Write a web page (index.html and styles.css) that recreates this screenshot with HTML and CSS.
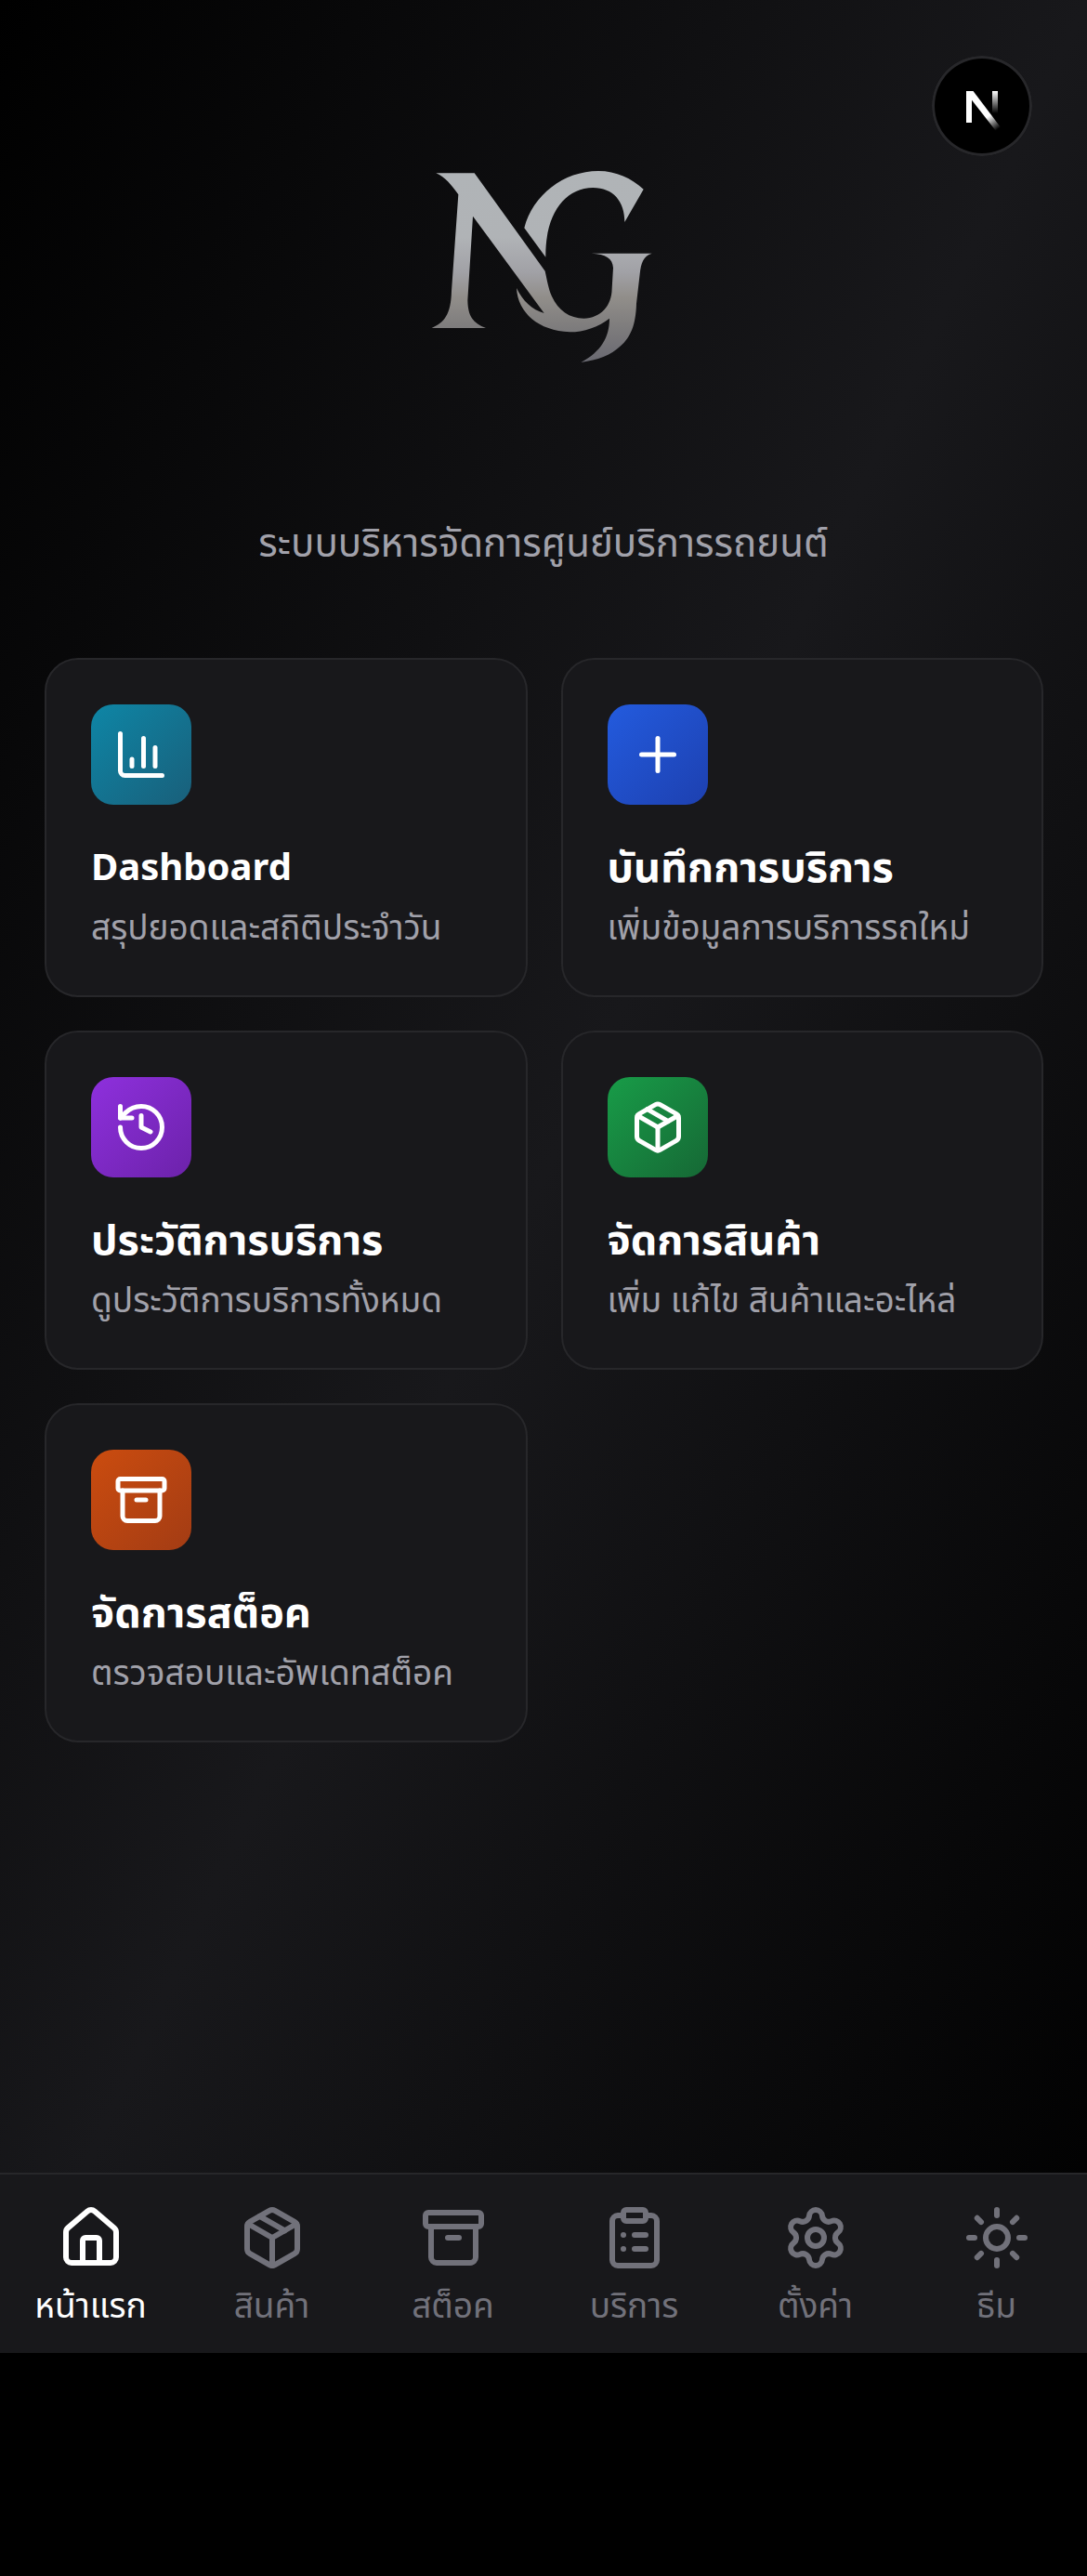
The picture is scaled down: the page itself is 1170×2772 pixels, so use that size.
FILE: index.html
```html
<!DOCTYPE html>
<html lang="th">
<head>
  <meta charset="UTF-8">
  <meta name="viewport" content="width=device-width, initial-scale=1">
  <title>NG</title>
  <link rel="stylesheet" href="styles.css">
</head>
<body>

  <!-- Shared icons -->
  <svg class="sprite" aria-hidden="true">
    <symbol id="icon-package" viewBox="0 0 24 24">
      <path d="M11 21.73a2 2 0 0 0 2 0l7-4A2 2 0 0 0 21 16V8a2 2 0 0 0-1-1.73l-7-4a2 2 0 0 0-2 0l-7 4A2 2 0 0 0 3 8v8a2 2 0 0 0 1 1.73z"/>
      <path d="M12 22V12"/>
      <path d="M3.29 7 12 12l8.71-5"/>
      <path d="m7.5 4.27 9 5.15"/>
    </symbol>
    <symbol id="icon-archive" viewBox="0 0 24 24">
      <rect width="20" height="5" x="2" y="3" rx="1"/>
      <path d="M4 8v11a2 2 0 0 0 2 2h12a2 2 0 0 0 2-2V8"/>
      <path d="M10 12h4"/>
    </symbol>
  </svg>

  <div class="app">
    <header class="header">
      <svg class="logo" viewBox="0 0 870 750" role="img" aria-label="NG">
        <defs>
          <linearGradient id="silver" gradientUnits="userSpaceOnUse" x1="0" y1="70" x2="0" y2="690">
            <stop offset="0" stop-color="#b0b4b7"/>
            <stop offset="0.35" stop-color="#b0b3b6"/>
            <stop offset="0.53" stop-color="#a1a1a6"/>
            <stop offset="0.66" stop-color="#918e8a"/>
            <stop offset="0.8" stop-color="#807e7e"/>
            <stop offset="1" stop-color="#696971"/>
          </linearGradient>
        </defs>
        <g fill="url(#silver)">
          <path d="M88 79H212L440 395C447 425 450 450 462 477C482 522 520 548 565 548C620 546 655 508 656 452L660 385C658 353 636 341 590 338H785C757 347 750 368 746 405L735 500C733 570 716 608 684 637C652 668 610 682 556 690C620 655 648 610 648 548C612 576 565 592 520 592C420 588 352 530 348 450C368 492 398 520 437 531L207 218L190 490C191 542 208 564 249 579H74C115 562 136 535 138 460L160 148C138 118 118 92 88 79Z"/>
          <path d="M373 256C400 150 500 72 612 72C670 72 720 96 758 131L697 237C697 170 660 126 595 126C500 128 440 215 442 350Z"/>
        </g>
      </svg>
      <p class="tagline">ระบบบริหารจัดการศูนย์บริการรถยนต์</p>
    </header>

    <main class="menu">
      <a class="card" href="#dashboard">
        <span class="card-icon cyan">
          <svg class="icon" viewBox="0 0 24 24" aria-hidden="true">
            <path d="M3 3v16a2 2 0 0 0 2 2h16"/>
            <path d="M18 17V9"/>
            <path d="M13 17V5"/>
            <path d="M8 17v-3"/>
          </svg>
        </span>
        <h2 lang="en">Dashboard</h2>
        <p>สรุปยอดและสถิติประจำวัน</p>
      </a>
      <a class="card" href="#service-new">
        <span class="card-icon blue">
          <svg class="icon" viewBox="0 0 24 24" aria-hidden="true">
            <path d="M5 12h14"/>
            <path d="M12 5v14"/>
          </svg>
        </span>
        <h2>บันทึกการบริการ</h2>
        <p>เพิ่มข้อมูลการบริการรถใหม่</p>
      </a>
      <a class="card" href="#history">
        <span class="card-icon purple">
          <svg class="icon" viewBox="0 0 24 24" aria-hidden="true">
            <path d="M3 12a9 9 0 1 0 9-9 9.75 9.75 0 0 0-6.74 2.74L3 8"/>
            <path d="M3 3v5h5"/>
            <path d="M12 7v5l4 2"/>
          </svg>
        </span>
        <h2>ประวัติการบริการ</h2>
        <p>ดูประวัติการบริการทั้งหมด</p>
      </a>
      <a class="card" href="#products">
        <span class="card-icon green">
          <svg class="icon" aria-hidden="true"><use href="#icon-package"/></svg>
        </span>
        <h2>จัดการสินค้า</h2>
        <p>เพิ่ม แก้ไข สินค้าและอะไหล่</p>
      </a>
      <a class="card" href="#stock">
        <span class="card-icon orange">
          <svg class="icon" aria-hidden="true"><use href="#icon-archive"/></svg>
        </span>
        <h2>จัดการสต็อค</h2>
        <p>ตรวจสอบและอัพเดทสต็อค</p>
      </a>
    </main>

    <nav class="bottom-nav">
      <a class="nav-item active" href="#home">
        <svg class="icon" viewBox="0 0 24 24" aria-hidden="true">
          <path d="M15 21v-8a1 1 0 0 0-1-1h-4a1 1 0 0 0-1 1v8"/>
          <path d="M3 10a2 2 0 0 1 .709-1.528l7-5.999a2 2 0 0 1 2.582 0l7 5.999A2 2 0 0 1 21 10v9a2 2 0 0 1-2 2H5a2 2 0 0 1-2-2z"/>
        </svg>
        <span>หน้าแรก</span>
      </a>
      <a class="nav-item" href="#products">
        <svg class="icon" aria-hidden="true"><use href="#icon-package"/></svg>
        <span>สินค้า</span>
      </a>
      <a class="nav-item" href="#stock">
        <svg class="icon" aria-hidden="true"><use href="#icon-archive"/></svg>
        <span>สต็อค</span>
      </a>
      <a class="nav-item" href="#services">
        <svg class="icon" viewBox="0 0 24 24" aria-hidden="true">
          <rect width="8" height="4" x="8" y="2" rx="1" ry="1"/>
          <path d="M16 4h2a2 2 0 0 1 2 2v14a2 2 0 0 1-2 2H6a2 2 0 0 1-2-2V6a2 2 0 0 1 2-2h2"/>
          <path d="M12 11h4"/>
          <path d="M12 16h4"/>
          <path d="M8 11h.01"/>
          <path d="M8 16h.01"/>
        </svg>
        <span>บริการ</span>
      </a>
      <a class="nav-item" href="#settings">
        <svg class="icon" viewBox="0 0 24 24" aria-hidden="true">
          <path d="M9.671 4.136a2.34 2.34 0 0 1 4.659 0 2.34 2.34 0 0 0 3.319 1.915 2.34 2.34 0 0 1 2.33 4.033 2.34 2.34 0 0 0 0 3.831 2.34 2.34 0 0 1-2.33 4.033 2.34 2.34 0 0 0-3.319 1.915 2.34 2.34 0 0 1-4.659 0 2.34 2.34 0 0 0-3.32-1.915 2.34 2.34 0 0 1-2.33-4.033 2.34 2.34 0 0 0 0-3.831A2.34 2.34 0 0 1 6.35 6.051a2.34 2.34 0 0 0 3.319-1.915"/>
          <circle cx="12" cy="12" r="3"/>
        </svg>
        <span>ตั้งค่า</span>
      </a>
      <button class="nav-item" type="button">
        <svg class="icon" viewBox="0 0 24 24" aria-hidden="true">
          <circle cx="12" cy="12" r="4"/>
          <path d="M12 2v2"/>
          <path d="M12 20v2"/>
          <path d="m4.93 4.93 1.41 1.41"/>
          <path d="m17.66 17.66 1.41 1.41"/>
          <path d="M2 12h2"/>
          <path d="M20 12h2"/>
          <path d="m6.34 17.66-1.41 1.41"/>
          <path d="m19.07 4.93-1.41 1.41"/>
        </svg>
        <span>ธีม</span>
      </button>
    </nav>

    <button class="dev-badge" type="button" aria-label="Next.js">
      <svg viewBox="0 0 108 108" aria-hidden="true">
        <defs>
          <linearGradient id="fade-leg" gradientUnits="userSpaceOnUse" x1="61" y1="65" x2="71" y2="79">
            <stop offset="0" stop-color="#fff"/>
            <stop offset="1" stop-color="#fff" stop-opacity="0"/>
          </linearGradient>
          <linearGradient id="fade-stem" gradientUnits="userSpaceOnUse" x1="0" y1="38" x2="0" y2="62">
            <stop offset="0" stop-color="#fff"/>
            <stop offset="1" stop-color="#fff" stop-opacity="0"/>
          </linearGradient>
        </defs>
        <path fill="#fff" d="M37 38h6v34h-6z"/>
        <path fill="url(#fade-leg)" d="M37 38h7.500L74 77l-5 4L37 40z"/>
        <path fill="url(#fade-stem)" d="M65 38h6v24h-6z"/>
      </svg>
    </button>
  </div>

</body>
</html>
```
FILE: styles.css
```css
* {
  box-sizing: border-box;
}

body {
  margin: 0;
  padding-bottom: 240px;
  background: #000;
  color: #fff;
  font-family: "Noto Sans", "Noto Sans Thai", sans-serif;
}

h2, p {
  margin: 0;
}

a {
  color: inherit;
  text-decoration: none;
}

.sprite {
  display: none;
}

.icon {
  fill: none;
  stroke: currentColor;
  stroke-width: 2;
  stroke-linecap: round;
  stroke-linejoin: round;
}

.app {
  position: relative;
  display: flex;
  flex-direction: column;
  min-height: calc(100vh - 240px);
  background: linear-gradient(to bottom right, #000, #18181b, #000);
}

/* Header */
.header {
  display: flex;
  flex-direction: column;
  align-items: center;
  gap: 142px;
  padding: 160px 48px 94px;
}

.logo {
  width: 290px;
  height: 250px;
}

.tagline {
  color: #a1a1aa;
  font-size: 42px;
  line-height: 62px;
}

/* Menu cards */
.menu {
  flex: 1;
  display: grid;
  grid-template-columns: 1fr 1fr;
  align-content: start;
  gap: 36px;
  padding: 0 47px 48px 48px;
}

.card {
  padding: 48px;
  background: #18181b;
  border: 2px solid #27272a;
  border-radius: 36px;
}

.card-icon {
  display: flex;
  align-items: center;
  justify-content: center;
  width: 108px;
  height: 108px;
  margin-bottom: 36px;
  border-radius: 24px;
}

.card-icon .icon {
  width: 60px;
  height: 60px;
}

.card h2 {
  margin-bottom: 9px;
  font-size: 45px;
  line-height: 60px;
}

.card h2:lang(en) {
  font-size: 40px;
}

.card p {
  color: #a1a1aa;
  font-size: 37px;
  line-height: 52px;
}

.cyan {
  background: linear-gradient(to bottom right, #0e86a6, #195f7a);
}

.blue {
  background: linear-gradient(to bottom right, #235bde, #1d40b0);
}

.purple {
  background: linear-gradient(to bottom right, #8e30dd, #6c22aa);
}

.green {
  background: linear-gradient(to bottom right, #189c48, #166835);
}

.orange {
  background: linear-gradient(to bottom right, #cb4c0f, #a33c14);
}

/* Bottom navigation */
.bottom-nav {
  display: grid;
  grid-template-columns: repeat(6, 1fr);
  height: 194px;
  background: #18181b;
  border-top: 2px solid #27272a;
}

.nav-item {
  display: flex;
  flex-direction: column;
  align-items: center;
  gap: 12px;
  padding: 32px 0 0;
  background: none;
  border: 0;
  color: #71717a;
  font: inherit;
  font-size: 37px;
  line-height: 48px;
  cursor: pointer;
}

.nav-item .icon {
  width: 72px;
  height: 72px;
}

.nav-item.active {
  color: #fff;
}

.dev-badge {
  position: absolute;
  top: 60px;
  right: 59px;
  width: 108px;
  height: 108px;
  padding: 0;
  background: #000;
  border: 0;
  border-radius: 50%;
  box-shadow: inset 0 0 0 3px #27272a;
  cursor: pointer;
}

.dev-badge svg {
  display: block;
}
```
